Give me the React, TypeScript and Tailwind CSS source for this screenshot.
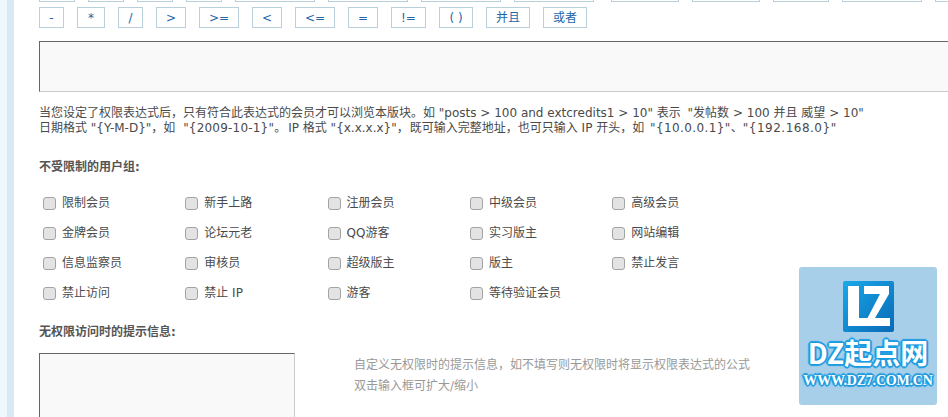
const row1 = [36, 36, 36, 36, 80, 80, 80, 80, 68, 68, 56, 80, 80];
const row2 = [
  { t: "-", w: 25 },
  { t: "*", w: 28 },
  { t: "/", w: 25 },
  { t: ">", w: 30 },
  { t: ">=", w: 40 },
  { t: "<", w: 30 },
  { t: "<=", w: 40 },
  { t: "=", w: 30 },
  { t: "!=", w: 35 },
  { t: "( )", w: 34 },
  { t: "并且", w: 44 },
  { t: "或者", w: 44 },
];
const groups = [
  ["限制会员", "新手上路", "注册会员", "中级会员", "高级会员"],
  ["金牌会员", "论坛元老", "QQ游客", "实习版主", "网站编辑"],
  ["信息监察员", "审核员", "超级版主", "版主", "禁止发言"],
  ["禁止访问", "禁止 IP", "游客", "等待验证会员"],
];

function Watermark() {
  return (
    <div className="absolute left-[799px] top-[267px] w-[138px] h-[138px] rounded-[3px] bg-[#a8cfe9] flex flex-col items-center">
      <svg width="51" height="51" viewBox="0 0 51 51" className="mt-[14px]">
        <defs>
          <linearGradient id="lz" x1="0" y1="0" x2="1" y2="1">
            <stop offset="0" stopColor="#19a9ea" />
            <stop offset="1" stopColor="#0a69b5" />
          </linearGradient>
        </defs>
        <rect width="51" height="51" rx="2" fill="url(#lz)" />
        <path d="M5 5h11v32h9v8H5z" fill="#fff" />
        <path d="M21 5h25v8L32 37h15v8H24v-7l13-25H21z" fill="#fff" />
      </svg>
      <div className="mt-[5px] h-[30px] leading-[30px] text-[28px] font-bold text-white whitespace-nowrap font-['Noto_Sans_CJK_SC',sans-serif] [text-shadow:-1px_-1px_0_#1d9be0,1px_-1px_0_#1d9be0,-1px_1px_0_#1d9be0,1px_1px_0_#1d9be0,0_2px_1px_#1d9be0,2px_0_1px_#1d9be0,-2px_0_1px_#1d9be0,0_-2px_1px_#1d9be0]">
        DZ起点网
      </div>
      <div className="mt-[6px] h-[15px] leading-[15px] text-[14px] tracking-[-0.2px] font-bold text-white whitespace-nowrap font-['Liberation_Serif',serif] [text-shadow:-1px_-1px_0_#1d9be0,1px_-1px_0_#1d9be0,-1px_1px_0_#1d9be0,1px_1px_0_#1d9be0,0_2px_1px_#1d9be0,2px_0_1px_#1d9be0,-2px_0_1px_#1d9be0,0_-2px_1px_#1d9be0]">
        WWW.DZ7.COM.CN
      </div>
    </div>
  );
}

export default function App() {
  return (
    <div className="relative flex h-[417px] w-[948px] overflow-hidden bg-white text-[12px] text-[#4a4a4a] font-['DejaVu_Sans','Noto_Sans_CJK_SC',sans-serif]">
      <div className="w-[7px] shrink-0 bg-[#eff8fd]" />
      <div className="w-[7px] shrink-0 bg-[#d8e9f5]" />
      <div className="pl-[25px] flex-1 min-w-0">
        <div className="flex gap-[13px] -mt-[19px] w-[1000px]">
          {row1.map((w, i) => (
            <div
              key={i}
              className={`h-[21px] shrink-0 border border-[#b9d0da] ${i === 8 ? "ml-[4px]" : ""}`}
              style={{ width: w }}
            />
          ))}
        </div>
        <div className="flex gap-[13px] mt-[5px]">
          {row2.map((b) => (
            <div
              key={b.t}
              className="h-[21px] shrink-0 border border-[#b9d0da] flex items-center justify-center text-[#2366a8] leading-none"
              style={{ width: b.w }}
            >
              {b.t}
            </div>
          ))}
        </div>
        <div className="mt-[13px] h-[51px] w-[1000px] border border-[#666] border-r-[#ccc] border-b-[#ccc] bg-[#f9f9f9]" />
        <div className="mt-[14px] leading-[15px] w-[880px] whitespace-nowrap">
          <p>
            当您设定了权限表达式后，只有符合此表达式的会员才可以浏览本版块。如 "posts &gt; 100 and extcredits1 &gt; 10" 表示 <span className="ml-[3px]">"发帖数 &gt; 100 并且 威望 &gt; 10"</span>
          </p>
          <p>
            日期格式 "{"{Y-M-D}"}"，如 <span className="ml-[4px] tracking-[0.2px]">"{"{2009-10-1}"}"</span>。<span className="ml-[2px]">IP</span> 格式 "{"{x.x.x.x}"}"，<span className="ml-[1px]">既可输入完整地址，也可只输入 IP 开头，如</span> <span className="ml-[2px] tracking-[0.4px]">"{"{10.0.0.1}"}"</span>、<span className="tracking-[0.5px]">"{"{192.168.0}"}"</span>
          </p>
        </div>
        <h3 className="mt-[23px] h-[16px] leading-[16px] font-bold text-[#555]">不受限制的用户组:</h3>
        <div className="mt-[13px] flex flex-col">
          {groups.map((row, i) => (
            <div key={i} className="h-[30px] grid grid-cols-[142.3px_142.3px_142.3px_142.3px_142.3px] items-center">
              {row.map((g) => (
                <label key={g} className="flex items-center pl-[4px]">
                  <input
                    type="checkbox"
                    className="appearance-none w-[13px] h-[13px] rounded-[3px] border border-[#a3a3a3] bg-[#e3e3e3] shrink-0"
                  />
                  <span className="ml-[6px]">{g}</span>
                </label>
              ))}
            </div>
          ))}
        </div>
        <h3 className="mt-[16px] h-[16px] leading-[16px] font-bold text-[#555]">无权限访问时的提示信息:</h3>
        <div className="mt-[13px] flex">
          <div className="w-[256px] h-[120px] shrink-0 border border-[#666] border-r-[#ccc] border-b-[#ccc] bg-[#f9f9f9]" />
          <div className="ml-[59px] mt-[2px] leading-[21px] text-[#999]">
            <p>自定义无权限时的提示信息，如不填写则无权限时将显示权限表达式的公式</p>
            <p>双击输入框可扩大/缩小</p>
          </div>
        </div>
      </div>
      <Watermark />
    </div>
  );
}
